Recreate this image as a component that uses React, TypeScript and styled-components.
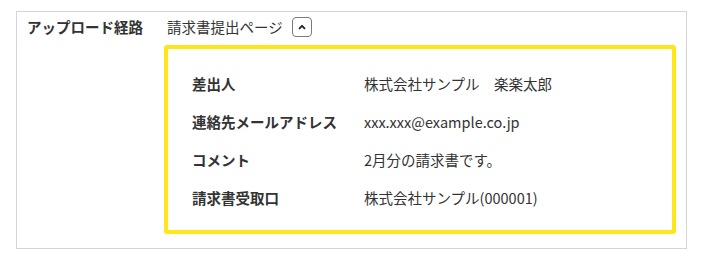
import React, { useState } from "react";
import styled, { createGlobalStyle } from "styled-components";

const Global = createGlobalStyle`
  html, body { margin: 0; padding: 0; background: #fff; }
  body { font-family: "Noto Sans CJK JP", "Noto Sans", sans-serif; color: #333; }
`;

const Page = styled.div`
  padding: 11px 0 0 16px;
`;

const Panel = styled.section`
  box-sizing: border-box;
  width: 671px;
  height: 238px;
  border: 1px solid #d5d5d5;
  padding: 5px 10px 14px 10px;
  display: grid;
  grid-template-columns: 137px 1fr;
  grid-template-rows: 20px 1fr;
  row-gap: 8px;
`;

const FieldLabel = styled.div`
  font-size: 14.5px;
  font-weight: 700;
  line-height: 20px;
  color: #333;
  white-space: nowrap;
`;

const Header = styled.div`
  display: flex;
  align-items: center;
  gap: 9px;
  padding-left: 3px;
  font-size: 14.5px;
  line-height: 20px;
`;

const Toggle = styled.button`
  box-sizing: border-box;
  width: 20px;
  height: 20px;
  padding: 0;
  border: 1px solid #7a7a7a;
  border-radius: 4px;
  background: #fff;
  display: flex;
  align-items: center;
  justify-content: center;
  cursor: pointer;
`;

const Detail = styled.div`
  grid-column: 2;
  box-sizing: border-box;
  border: 4px solid #ffe61a;
  border-radius: 3px;
  padding: 15px 0 14px 24px;
`;

const Row = styled.div`
  display: grid;
  grid-template-columns: 172px 1fr;
  height: 38px;
  align-items: center;
  font-size: 14.5px;
`;

const RowLabel = styled.div`
  font-weight: 700;
  color: #333;
`;

const RowValue = styled.div`
  color: #333;
`;

const rows: [string, string][] = [
  ["差出人", "株式会社サンプル\u3000楽楽太郎"],
  ["連絡先メールアドレス", "xxx.xxx@example.co.jp"],
  ["コメント", "2月分の請求書です。"],
  ["請求書受取口", "株式会社サンプル(000001)"],
];

export default function App() {
  const [open, setOpen] = useState(true);
  return (
    <Page>
      <Global />
      <Panel>
        <FieldLabel>アップロード経路</FieldLabel>
        <Header>
          請求書提出ページ
          <Toggle onClick={() => setOpen(!open)} aria-label="toggle">
            <svg width="10" height="10" viewBox="0 0 10 10">
              <path
                d={open ? "M2.5 6.3 L5 3.8 L7.5 6.3" : "M2.5 3.8 L5 6.3 L7.5 3.8"}
                fill="none"
                stroke="#222"
                strokeWidth="1.8"
                strokeLinecap="round"
                strokeLinejoin="round"
              />
            </svg>
          </Toggle>
        </Header>
        {open && (
          <Detail>
            {rows.map(([k, v]) => (
              <Row key={k}>
                <RowLabel>{k}</RowLabel>
                <RowValue>{v}</RowValue>
              </Row>
            ))}
          </Detail>
        )}
      </Panel>
    </Page>
  );
}
